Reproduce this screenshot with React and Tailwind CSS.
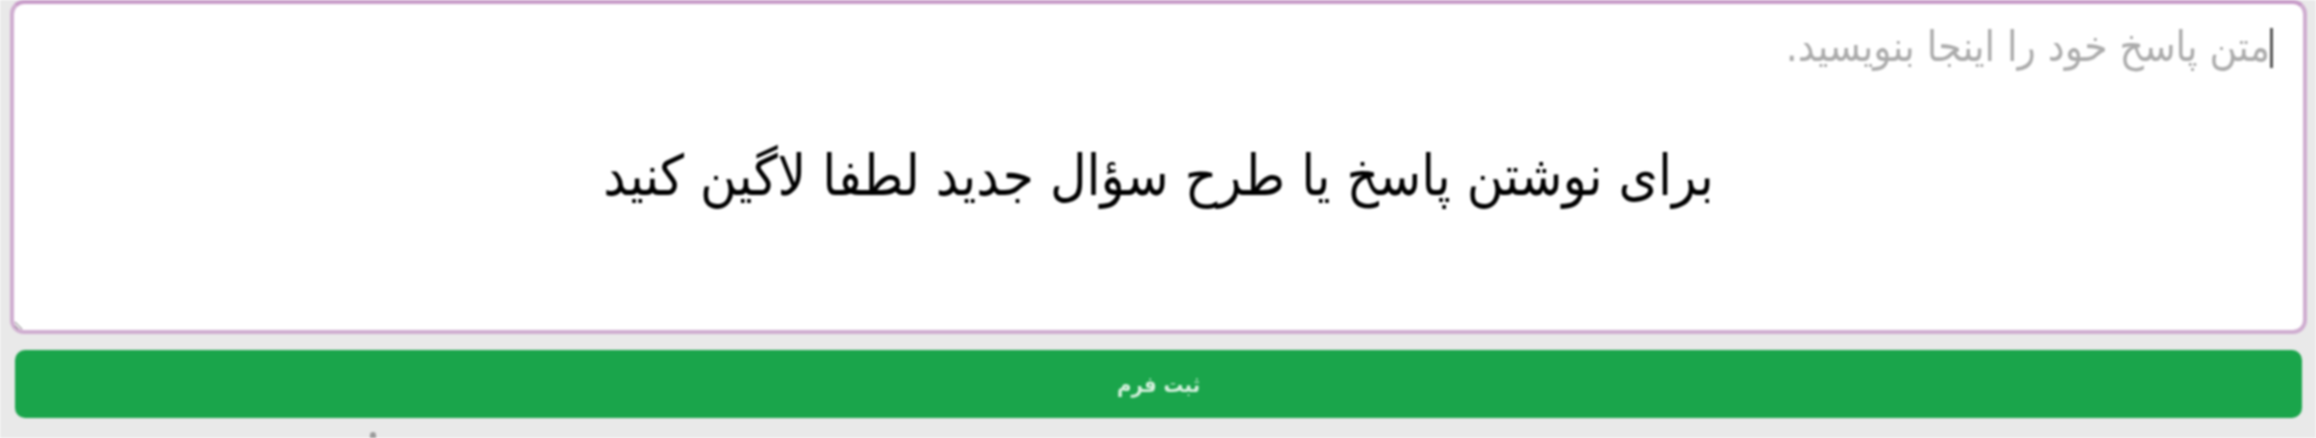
import React from "react";

const font = '"DejaVu Sans Condensed", "DejaVu Sans", "Noto Sans", sans-serif';

export default function App() {
  return (
    <div
      dir="rtl"
      className="w-full h-[438px] bg-[#e9e9e9] overflow-hidden pl-[10px] pr-[9px] blur-[1px]"
      style={{ fontFamily: font }}
    >
      <div className="relative h-[334px] rounded-[14px] border-[4px] border-[#cfadd0] border-t-[#c79bc8] bg-white">
        <textarea
          dir="rtl"
          placeholder="متن پاسخ خود را اینجا بنویسید."
          className="block w-full h-full resize-y bg-transparent outline-none rounded-[10px] pt-[17px] pr-[33px] pl-4 text-[42px] leading-[52px] text-[#333] placeholder:text-[#ababab]"
          style={{ fontFamily: font }}
        />
        <div className="pointer-events-none absolute right-[30px] top-[24px] w-[3px] h-[40px] bg-[#555]" />
        <div className="pointer-events-none absolute inset-x-0 top-[136px] flex justify-center">
          <span className="text-[56px] leading-[72px] text-black">
            برای نوشتن پاسخ یا طرح سؤال جدید لطفا لاگین کنید
          </span>
        </div>
      </div>
      <div className="pt-[16px] pl-[5px] pr-[5px]">
        <button
          className="w-full h-[68px] rounded-[10px] bg-[#1aa54b] flex items-center justify-center text-[22px] font-bold text-[#d4f0dc]"
          style={{ fontFamily: font }}
        >
          ثبت فرم
        </button>
      </div>
      <div dir="ltr" className="pt-[14px] pl-[360px]">
        <div className="w-[6px] h-[8px] rounded-full bg-[#9a9a9a]" />
      </div>
    </div>
  );
}
